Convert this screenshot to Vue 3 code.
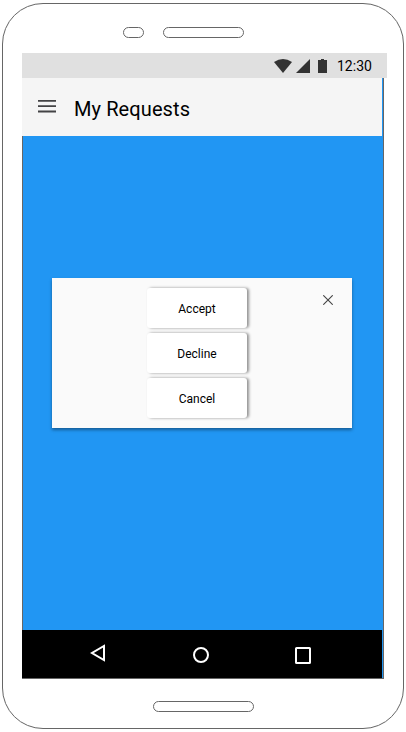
<script setup>
const actions = ['Accept', 'Decline', 'Cancel']
</script>

<template>
  <div class="phone">
    <div class="sensors">
      <span class="pill camera"></span>
      <span class="pill speaker"></span>
    </div>
    <header class="status">
      <svg class="wifi" width="18" height="14" viewBox="0 0 18 14"><path d="M0 3Q9-3 18 3L9 14Z" /></svg>
      <svg class="signal" width="14" height="14" viewBox="0 0 14 14"><path d="M14 0V14H0Z" /></svg>
      <svg class="battery" width="9" height="14" viewBox="0 0 9 14"><path d="M3 0H6V1H9V14H0V1H3Z" /></svg>
      <span class="time">12:30</span>
    </header>
    <main class="screen">
      <div class="appbar">
        <svg class="menu" width="18" height="14" viewBox="0 0 18 14">
          <path d="M0 0H18V1.7H0ZM0 5.3H18V7H0ZM0 10.6H18V12.4H0Z" fill="#434345" />
        </svg>
        <h1>My Requests</h1>
      </div>
      <section class="content">
        <div class="dialog">
          <div class="actions">
            <button v-for="action in actions" :key="action" type="button">{{ action }}</button>
          </div>
          <svg class="close" width="10" height="10" viewBox="0 0 10 10"><path d="M.3 .3L9.7 9.7M9.7 .3L.3 9.7" /></svg>
        </div>
      </section>
      <nav class="navbar">
        <svg class="back" width="16" height="18" viewBox="0 0 16 18"><path d="M14 2V16L2 9Z" /></svg>
        <svg class="home" width="16" height="16" viewBox="0 0 16 16"><circle cx="8" cy="8" r="7" /></svg>
        <svg class="recent" width="16" height="17" viewBox="0 0 16 17"><rect x="1" y="1" width="14" height="15" rx=".6" /></svg>
      </nav>
    </main>
    <div class="bottom"><span class="pill button"></span></div>
  </div>
</template>

<style>
body {
  background: #fff;
  overflow: hidden;
}
#app {
  display: flow-root;
}
</style>

<style scoped>
.phone {
  box-sizing: border-box;
  width: 402px;
  height: 726px;
  margin: 3px 2px;
  border: 1px solid #666;
  border-radius: 41px;
  background: #fff;
  font-family: Roboto, sans-serif;
  color: #000;
}
.sensors {
  display: flex;
  height: 49px;
  box-sizing: border-box;
  padding: 23px 0 0 119.5px;
  gap: 19px;
}
.pill {
  box-sizing: border-box;
  height: 11px;
  border: 1px solid #666;
  border-radius: 6px;
}
.camera {
  width: 21px;
}
.speaker {
  width: 81px;
}
.status {
  box-sizing: border-box;
  display: flex;
  align-items: center;
  width: 365px;
  height: 25px;
  margin-left: 19px;
  padding-left: 252px;
  background: #e0e0e0;
  fill: #333;
}
.signal {
  margin-left: 4px;
}
.battery {
  margin-left: 8px;
}
.time {
  margin-left: 10px;
  font-size: 14px;
  line-height: 24px;
}
.screen {
  box-sizing: border-box;
  display: flex;
  flex-direction: column;
  width: 362px;
  height: 601px;
  margin-left: 19px;
  border: solid #666;
  border-width: 0 1px 1px;
  background: #2196f3;
}
.appbar {
  display: flex;
  align-items: center;
  width: 360px;
  height: 58px;
  margin-left: -1px;
  background: #f5f5f5;
}
.menu {
  margin: 0 18px 0 16px;
}
h1 {
  margin: 4px 0 0;
  font-size: 20px;
  font-weight: 400;
  letter-spacing: 0.1px;
  line-height: 24px;
}
.content {
  flex: 1;
  padding: 142px 0 0 29px;
}
.dialog {
  box-sizing: border-box;
  display: flex;
  align-items: flex-start;
  width: 300px;
  height: 150px;
  padding: 10px 0 0 95px;
  background: #fafafa;
  box-shadow: 0 2px 3px rgba(0, 0, 0, 0.38);
}
.actions {
  display: flex;
  flex-direction: column;
  gap: 5px;
}
button {
  width: 100px;
  height: 40px;
  padding: 2px 0 0;
  border: 0;
  border-radius: 3px;
  background: #fff;
  box-shadow: 2px 0 3px rgba(0, 0, 0, 0.42);
  color: #000;
  font-family: Roboto, sans-serif;
  font-size: 12px;
}
.close {
  margin: 7px 0 0 76px;
  fill: none;
  stroke: #444;
  stroke-width: 1.1;
}
.navbar {
  display: flex;
  align-items: flex-start;
  width: 360px;
  height: 48px;
  margin-left: -1px;
  background: #000;
  fill: none;
  stroke: #fff;
  stroke-width: 2;
}
.back {
  margin: 14px 0 0 67.5px;
}
.home {
  margin: 16.5px 0 0 87.5px;
}
.recent {
  margin: 17px 0 0 86px;
}
.bottom {
  display: flex;
  padding: 22px 0 0 149.5px;
}
.bottom .pill {
  width: 101px;
}
</style>
